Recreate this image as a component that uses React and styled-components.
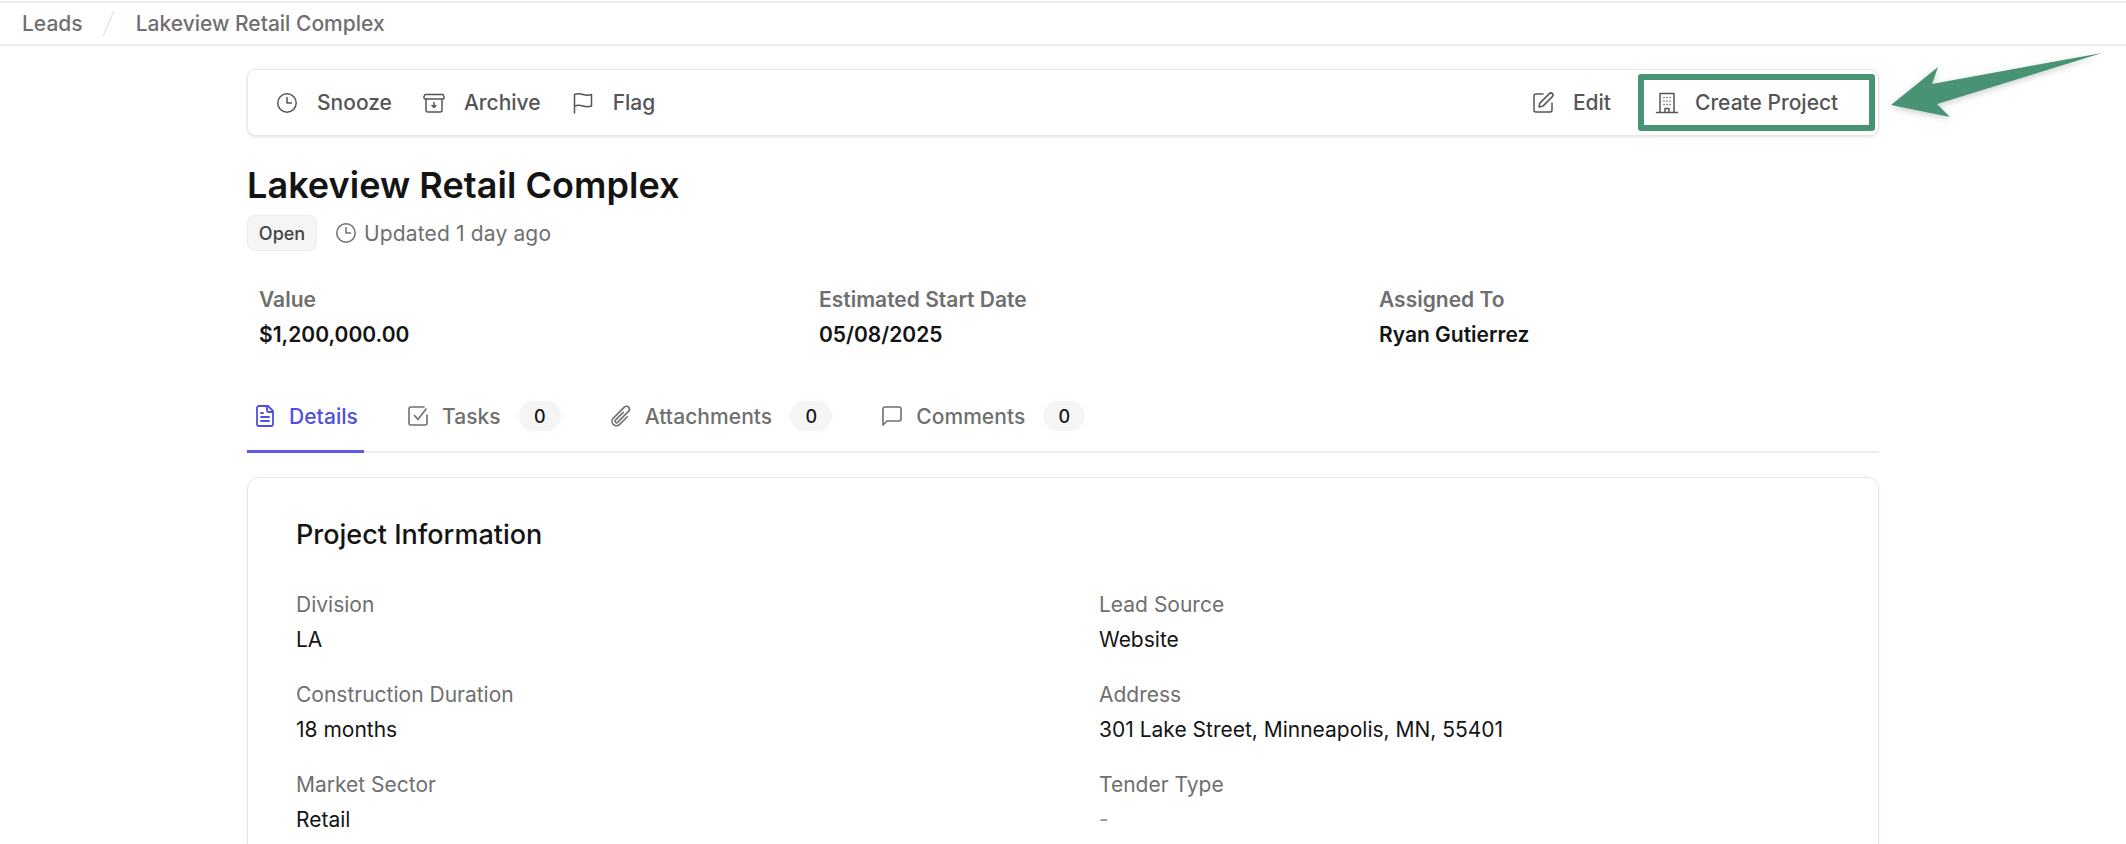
import React from "react";
import styled, { createGlobalStyle } from "styled-components";
import { LuSquarePen, LuFileText, LuMessageSquare } from "react-icons/lu";
import { HiOutlinePaperClip } from "react-icons/hi2";

const GlobalStyle = createGlobalStyle`
  html, body { margin: 0; padding: 0; background: #fff; }
  body {
    font-family: Inter, "Liberation Sans", sans-serif;
    color: #141414;
    overflow: hidden;
    height: 844px;
  }
  * { box-sizing: border-box; }
`;

const Page = styled.div`
  position: relative;
  width: 2126px;
  height: 844px;
  overflow: hidden;
`;

const Breadcrumbs = styled.nav`
  display: flex;
  align-items: center;
  height: 45px;
  margin-top: 1px;
  padding-left: 22px;
  border-top: 2px solid #ebebeb;
  border-bottom: 2px solid #ebebeb;
  font-size: 21px;
  font-weight: 500;
  color: #6f6f6f;
`;

const Slash = styled.span`
  width: 1px;
  height: 27px;
  margin: 0 27px 0 25px;
  background: #d9d9d9;
  transform: rotate(23deg);
`;

const Content = styled.main`
  width: 1632px;
  margin: 23px 0 0 247px;
`;

const Toolbar = styled.div`
  display: flex;
  align-items: center;
  justify-content: space-between;
  height: 67px;
  padding: 0 3px 0 27px;
  border: 1px solid #e6e6e6;
  border-radius: 9px;
  box-shadow: 0 1px 3px rgba(0, 0, 0, 0.12);
`;

const ToolGroup = styled.div`
  display: flex;
  align-items: center;
  gap: ${(p) => p.$gap || 30}px;
`;

const ToolButton = styled.div`
  display: flex;
  align-items: center;
  gap: 18px;
  font-size: 21px;
  font-weight: 500;
  color: #555;
  white-space: nowrap;

  svg {
    width: 24px;
    height: 24px;
    stroke-width: 1.5;
    flex: none;
  }
`;

const CreateButton = styled(ToolButton)`
  width: 237px;
  height: 57px;
  padding-left: 11px;
  gap: 16px;
  border: 6px solid #479373;
  border-radius: 3px;
`;

const Title = styled.h1`
  margin: 27px 0 0;
  font-size: 36px;
  line-height: 44px;
  font-weight: 600;
  letter-spacing: 0.05px;
  color: #141414;
`;

const MetaRow = styled.div`
  display: flex;
  align-items: center;
  gap: 17px;
  margin-top: 8px;
`;

const StatusChip = styled.span`
  display: flex;
  align-items: center;
  justify-content: center;
  width: 70px;
  height: 36px;
  border: 1px solid #ebebeb;
  border-radius: 8px;
  background: #f5f5f5;
  font-size: 18px;
  font-weight: 500;
  color: #444;
`;

const Updated = styled.span`
  display: flex;
  align-items: center;
  gap: 6px;
  font-size: 21px;
  letter-spacing: 0.15px;
  color: #6f6f6f;

  svg {
    width: 24px;
    height: 24px;
    stroke-width: 1.5;
  }
`;

const Stats = styled.div`
  display: grid;
  grid-template-columns: repeat(3, 560px);
  margin-top: 34px;
  padding-left: 12px;
`;

const StatLabel = styled.div`
  font-size: 21px;
  line-height: 30px;
  font-weight: 600;
  color: #6f6f6f;
`;

const StatValue = styled.div`
  margin-top: 5px;
  font-size: 21px;
  line-height: 30px;
  font-weight: 600;
  color: #141414;
`;

const Tabs = styled.div`
  display: flex;
  align-items: stretch;
  gap: 36px;
  height: 71px;
  margin-top: 32px;
  border-bottom: 2px solid #ebebeb;
`;

const Tab = styled.div`
  display: flex;
  align-items: center;
  gap: 12px;
  margin-bottom: -2px;
  padding: 0 6px;
  border-bottom: 3px solid ${(p) => (p.$active ? "#5b5be6" : "transparent")};
  font-size: 21px;
  font-weight: 500;
  letter-spacing: 0.06px;
  color: ${(p) => (p.$active ? "#5050e0" : "#6f6f6f")};

  svg {
    width: 24px;
    height: 24px;
    stroke-width: ${(p) => (p.$active ? 1.8 : 1.6)};
    flex: none;
  }
`;

const Count = styled.span`
  display: flex;
  align-items: center;
  justify-content: center;
  width: 42px;
  height: 30px;
  margin-left: 6px;
  border-radius: 15px;
  background: #f5f5f5;
  font-size: 18px;
  font-weight: 500;
  color: #141414;
`;

const Card = styled.section`
  height: 400px;
  margin-top: 24px;
  padding: 39px 48px;
  border: 1px solid #e6e6e6;
  border-radius: 12px;
  box-shadow: 0 1px 3px rgba(0, 0, 0, 0.08);
`;

const CardTitle = styled.h2`
  margin: 0;
  font-size: 27px;
  line-height: 36px;
  font-weight: 500;
  color: #141414;
`;

const Fields = styled.div`
  display: grid;
  grid-template-columns: 803px 1fr;
  row-gap: 25px;
  margin-top: 37px;
`;

const FieldLabel = styled.div`
  font-size: 21px;
  line-height: 30px;
  color: #6f6f6f;
`;

const FieldValue = styled.div`
  margin-top: 5px;
  font-size: 21px;
  line-height: 30px;
  color: ${(p) => (p.$muted ? "#8f8f8f" : "#141414")};
`;

const ArrowMark = styled.svg`
  position: absolute;
  left: 1885px;
  top: 46px;
  filter: drop-shadow(0 2px 3px rgba(0, 0, 0, 0.2));
`;

const Icon = ({ children }) => (
  <svg viewBox="0 0 24 24" fill="none" stroke="currentColor" strokeLinecap="round" strokeLinejoin="round">
    {children}
  </svg>
);

const ClockIcon = () => (
  <Icon>
    <circle cx="12" cy="12" r="9.2" />
    <path d="M12 6.500V12h4.500" />
  </Icon>
);

const ArchiveIcon = () => (
  <Icon>
    <path d="M3 3.500h18l1 2V7a1 1 0 0 1-1 1H3a1 1 0 0 1-1-1V5.500z" />
    <path d="M4 8v11a2 2 0 0 0 2 2h12a2 2 0 0 0 2-2V8" />
    <path d="M12 11.500v5M10 14.500l2 2 2-2" />
  </Icon>
);

const FlagIcon = () => (
  <Icon>
    <path d="M3.500 22V3.500c3-1 5-1 8.500 0s5.500 1 8.500 0V15c-3 1-5 1-8.500 0s-5.500-1-8.500 0" />
  </Icon>
);

const BuildingIcon = () => (
  <Icon>
    <path d="M1.500 21.500h21M5 21.500V2.500h14v19M10 21.500v-4h4v4" />
    <path d="M9 6.500h.01M12 6.500h.01M15 6.500h.01M9 10h.01M12 10h.01M15 10h.01M9 13.500h.01M12 13.500h.01M15 13.500h.01" />
  </Icon>
);

const TaskIcon = () => (
  <Icon>
    <path d="M21 11v8a2 2 0 0 1-2 2H5a2 2 0 0 1-2-2V5a2 2 0 0 1 2-2h13" />
    <path d="M8.500 11.500l3.500 4L20 5" />
  </Icon>
);

const fields = [
  ["Division", "LA", "Lead Source", "Website"],
  ["Construction Duration", "18 months", "Address", "301 Lake Street, Minneapolis, MN, 55401"],
  ["Market Sector", "Retail", "Tender Type", "-"],
];

export default function App() {
  return (
    <Page>
      <GlobalStyle />
      <Breadcrumbs>
        <span>Leads</span>
        <Slash />
        <span>Lakeview Retail Complex</span>
      </Breadcrumbs>
      <Content>
        <Toolbar>
          <ToolGroup>
            <ToolButton><ClockIcon />Snooze</ToolButton>
            <ToolButton><ArchiveIcon />Archive</ToolButton>
            <ToolButton><FlagIcon />Flag</ToolButton>
          </ToolGroup>
          <ToolGroup $gap={27}>
            <ToolButton><LuSquarePen />Edit</ToolButton>
            <CreateButton><BuildingIcon />Create Project</CreateButton>
          </ToolGroup>
        </Toolbar>
        <Title>Lakeview Retail Complex</Title>
        <MetaRow>
          <StatusChip>Open</StatusChip>
          <Updated><ClockIcon />Updated 1 day ago</Updated>
        </MetaRow>
        <Stats>
          <div><StatLabel>Value</StatLabel><StatValue>$1,200,000.00</StatValue></div>
          <div><StatLabel>Estimated Start Date</StatLabel><StatValue>05/08/2025</StatValue></div>
          <div><StatLabel>Assigned To</StatLabel><StatValue>Ryan Gutierrez</StatValue></div>
        </Stats>
        <Tabs>
          <Tab $active><LuFileText />Details</Tab>
          <Tab><TaskIcon />Tasks<Count>0</Count></Tab>
          <Tab><HiOutlinePaperClip />Attachments<Count>0</Count></Tab>
          <Tab><LuMessageSquare />Comments<Count>0</Count></Tab>
        </Tabs>
        <Card>
          <CardTitle>Project Information</CardTitle>
          <Fields>
            {fields.map((row) => (
              <React.Fragment key={row[0]}>
                <div><FieldLabel>{row[0]}</FieldLabel><FieldValue>{row[1]}</FieldValue></div>
                <div><FieldLabel>{row[2]}</FieldLabel><FieldValue $muted={row[3] === "-"}>{row[3]}</FieldValue></div>
              </React.Fragment>
            ))}
          </Fields>
        </Card>
      </Content>
      <ArrowMark width="225" height="80" viewBox="1885 46 225 80">
        <path d="M2102 53 L1932 84 L1938 67 L1891 105 L1950 117 L1937 104 Z" fill="#479373" />
      </ArrowMark>
    </Page>
  );
}
